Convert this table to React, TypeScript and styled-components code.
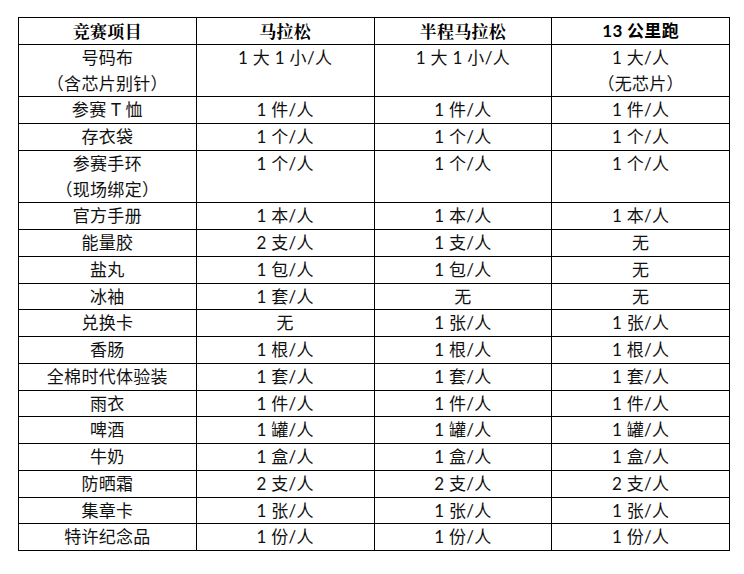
import React from "react";
import styled, { createGlobalStyle } from "styled-components";

const GlobalStyle = createGlobalStyle`
    html, body {
        margin: 0;
        padding: 0;
        background: #fff;
    }
`;

type Row = [string[], string[], string[], string[]];

const headers = ["竞赛项目", "马拉松", "半程马拉松", "13 公里跑"];

const rows: Row[] = [
    [["号码布", "（含芯片别针）"], ["1 大 1 小/人"], ["1 大 1 小/人"], ["1 大/人", "（无芯片）"]],
    [["参赛 T 恤"], ["1 件/人"], ["1 件/人"], ["1 件/人"]],
    [["存衣袋"], ["1 个/人"], ["1 个/人"], ["1 个/人"]],
    [["参赛手环", "（现场绑定）"], ["1 个/人"], ["1 个/人"], ["1 个/人"]],
    [["官方手册"], ["1 本/人"], ["1 本/人"], ["1 本/人"]],
    [["能量胶"], ["2 支/人"], ["1 支/人"], ["无"]],
    [["盐丸"], ["1 包/人"], ["1 包/人"], ["无"]],
    [["冰袖"], ["1 套/人"], ["无"], ["无"]],
    [["兑换卡"], ["无"], ["1 张/人"], ["1 张/人"]],
    [["香肠"], ["1 根/人"], ["1 根/人"], ["1 根/人"]],
    [["全棉时代体验装"], ["1 套/人"], ["1 套/人"], ["1 套/人"]],
    [["雨衣"], ["1 件/人"], ["1 件/人"], ["1 件/人"]],
    [["啤酒"], ["1 罐/人"], ["1 罐/人"], ["1 罐/人"]],
    [["牛奶"], ["1 盒/人"], ["1 盒/人"], ["1 盒/人"]],
    [["防晒霜"], ["2 支/人"], ["2 支/人"], ["2 支/人"]],
    [["集章卡"], ["1 张/人"], ["1 张/人"], ["1 张/人"]],
    [["特许纪念品"], ["1 份/人"], ["1 份/人"], ["1 份/人"]],
];

export default function App() {
    return (
        <>
            <GlobalStyle />
            <Page>
                <Table>
                    <colgroup>
                        {headers.map((h) => (
                            <Col key={h} />
                        ))}
                    </colgroup>
                    <thead>
                        <tr>
                            {headers.map((h, i) => (
                                <HeadCell key={h} $latin={i === 3}>
                                    {h}
                                </HeadCell>
                            ))}
                        </tr>
                    </thead>
                    <tbody>
                        {rows.map((row, i) => (
                            <tr key={i}>
                                {row.map((lines, j) => (
                                    <Cell key={j}>
                                        {lines.map((line) => (
                                            <Line key={line}>{line}</Line>
                                        ))}
                                    </Cell>
                                ))}
                            </tr>
                        ))}
                    </tbody>
                </Table>
            </Page>
        </>
    );
}

const Page = styled.div`
    padding: 17px 0 0 18px;
`;

const Table = styled.table`
    width: 712px;
    border-collapse: collapse;
    table-layout: fixed;
    border: 1px solid #000;
    font-family: Lato, "Noto Sans CJK SC", sans-serif;
    font-size: 17px;
    letter-spacing: 0.3px;
    color: #111;
`;

const Col = styled.col`
    width: 25%;
`;

const HeadCell = styled.th<{ $latin?: boolean }>`
    border: 1px solid #000;
    padding: 0;
    height: 25.75px;
    line-height: 25.75px;
    font-family: ${(props) =>
        props.$latin
            ? `Lato, "Noto Sans CJK SC", sans-serif`
            : `"Noto Serif CJK SC", "Noto Sans CJK SC", serif`};
    font-weight: 700;
    text-align: center;
    vertical-align: top;
    color: #000;
`;

const Cell = styled.td`
    border: 1px solid #000;
    padding: 0;
    text-align: center;
    vertical-align: top;
`;

const Line = styled.div`
    height: 25.75px;
    line-height: 25.75px;
    white-space: nowrap;
`;
